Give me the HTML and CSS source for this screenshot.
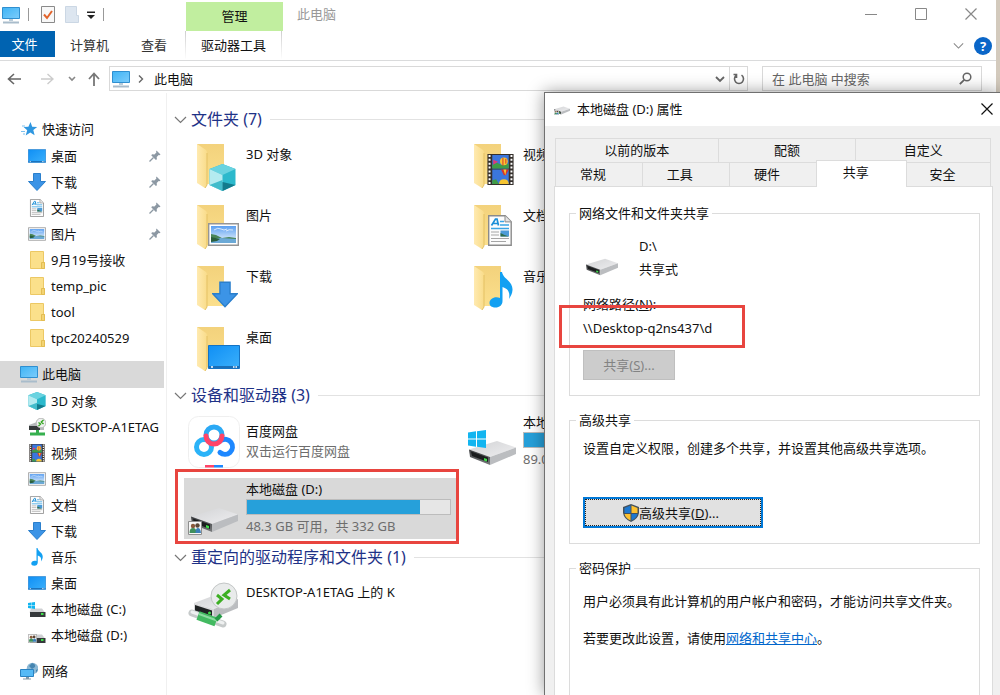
FILE: index.html
```html
<!DOCTYPE html>
<html lang="zh-CN">
<head>
    <meta charset="UTF-8">
    <meta name="viewport" content="width=device-width, initial-scale=1.0">
    <title>此电脑</title>
    <link rel="stylesheet" href="styles.css">
</head>
<body>
    <!-- 图标 -->
    <svg class="sprite" width="0" height="0" aria-hidden="true">
        <defs>
            <linearGradient id="g-blue" x1="0" y1="0" x2="1" y2="1">
                <stop offset="0" stop-color="#3fb4f5"/><stop offset="1" stop-color="#7cccfb"/>
            </linearGradient>
            <linearGradient id="g-desk" x1="0" y1="0" x2="1" y2="1">
                <stop offset="0" stop-color="#0f8ff5"/><stop offset="1" stop-color="#3bb0fb"/>
            </linearGradient>
            <linearGradient id="g-back" x1="0" y1="0" x2="0" y2="1">
                <stop offset="0" stop-color="#f3d27c"/><stop offset="1" stop-color="#fbdf8c"/>
            </linearGradient>
            <linearGradient id="g-flap" x1="0" y1="0" x2="1" y2="0">
                <stop offset="0" stop-color="#ffeab0"/><stop offset="1" stop-color="#f9dc8a"/>
            </linearGradient>
            <linearGradient id="g-drive" x1="0" y1="0" x2="1" y2="1">
                <stop offset="0" stop-color="#d2d3d5"/><stop offset="1" stop-color="#eeeef0"/>
            </linearGradient>
            <linearGradient id="g-front" x1="0" y1="0" x2="0" y2="1">
                <stop offset="0" stop-color="#3c3e40"/><stop offset="1" stop-color="#77797b"/>
            </linearGradient>
            <linearGradient id="g-sky" x1="0" y1="0" x2="0" y2="1">
                <stop offset="0" stop-color="#5b9ff0"/><stop offset="1" stop-color="#f2f9fe"/>
            </linearGradient>
        </defs>
        <symbol id="i-pc" viewBox="0 0 18 18">
            <path d="M.5 1.500h17v11H.5z" fill="url(#g-blue)" stroke="#2f8fd0"/>
            <path d="M7 13h4v2H7z" fill="#b9cbd8"/>
            <path d="M1 15.500h16v2H1z" fill="#a9bccb"/>
        </symbol>
        <symbol id="i-star" viewBox="0 0 18 18">
            <path d="M10.500 2l1.700 4.700 5 .2-3.900 3.200 1.300 5.200-4.300-2.900-4.600 3 1.500-5.200-3.600-3.200 4.800-.2z" fill="#2f97e0"/>
            <path d="M2 6h3M1 11.500h4M3 14h2" stroke="#7cc0ee"/>
        </symbol>
        <symbol id="i-desktop" viewBox="0 0 32 24">
            <path d="M.5.5h31v23H.5z" fill="url(#g-desk)" stroke="#1473c4"/>
            <path d="M1 21h30v2H1z" fill="#1a6fb8"/>
            <path d="M3 22h2M25 22h1.500M27.500 22h1.500" stroke="#fff" stroke-width="1.500"/>
        </symbol>
        <symbol id="i-down" viewBox="0 0 18 18">
            <path d="M5.500.5h7v8h5L9 17.500.5 8.500h5z" fill="#3c94e6" stroke="#2b7fcc"/>
        </symbol>
        <symbol id="i-doc" viewBox="0 0 24 31">
            <path d="M.7.7h16.500l6 6v23.500H.7z" fill="#fcfcfc" stroke="#8b8b8b" stroke-width="1.400"/>
            <path d="M17 .7v6.200h6.200" fill="#e4e4e4" stroke="#8b8b8b"/>
            <path d="M3.500 10.500L7.500 4h1.500l1.500 6.500M5 8.500h4.500" fill="none" stroke="#1a8fd8" stroke-width="1.700"/>
            <path d="M12 6.500h4M12 10h9M3 13.500h18" stroke="#3aa5e4" stroke-width="1.400"/>
            <path d="M3 17h8M3 20h8M3 23.500h18M3 26.500h15" stroke="#a5a5a5" stroke-width="1.200"/>
            <path d="M12.500 15.500h8.500v6h-8.500z" fill="#4d9bd8"/><path d="M12.500 18l4 2 4.500 1.500h-8.500z" fill="#2f6d4a"/>
        </symbol>
        <symbol id="i-pic" viewBox="0 0 31 23">
            <path d="M.7.7h29.600v21.600H.7z" fill="#fff" stroke="#959595" stroke-width="1.400"/>
            <path d="M3 3h25v17H3z" fill="url(#g-sky)"/>
            <path d="M6 7q4-3 7-1t6 0M18 8q3-2 7-1" stroke="#fff" fill="none" opacity=".7"/>
            <path d="M3 11l5 1 6 3 7-1 7 1v2H3z" fill="#4a8558"/>
            <path d="M3 16l10-1 15 1v4H3z" fill="#6ba9d6"/>
            <path d="M3 14l9 2-3 2-6 1z" fill="#2b5f3d"/>
        </symbol>
        <symbol id="i-folder" viewBox="0 0 18 18">
            <path d="M2.500.5h13v11h1v6h-14z" fill="#fbe08b" stroke="#ecc864"/>
            <path d="M13.500 11.500h3v6h-3z" fill="#f3d373" stroke="#e3bd52"/>
        </symbol>
        <symbol id="i-bigfolder" viewBox="0 0 52 52">
            <path d="M9 4h27v40H17z" fill="url(#g-back)"/>
            <path d="M9 4l9 6q1 1 1 3v32l-2 3-8-5z" fill="url(#g-flap)"/>
            <path d="M19 13v32l-2 3" fill="none" stroke="#e4c164"/>
        </symbol>
        <symbol id="i-cube" viewBox="0 0 26 27">
            <path d="M13 0l13 5v16l-13 6-13-6V5z" fill="#2cb9cc"/>
            <path d="M13 0l13 5-13 6L0 5z" fill="#6ad3e0"/>
            <path d="M0 5l13 6v16L0 21z" fill="#b4ebf0"/>
            <path d="M0 21l13-5v11z" fill="#42bccb"/>
            <path d="M13 18l13 3-13 6z" fill="#137b8c"/>
        </symbol>
        <symbol id="i-film" viewBox="0 0 27 32">
            <path d="M0 0h27v32H0z" fill="#35302c"/>
            <path d="M2.200 1v31M24.800 1v31" stroke="#fff" stroke-width="2" stroke-dasharray="2 2"/>
            <path d="M5 1h17v14H5zM5 16h17v15H5z" fill="#3b76dd"/>
            <path d="M5 11l5-2 4 2 8-1v5H5z" fill="#3f9c46"/>
            <circle cx="17" cy="7.500" r="4" fill="#f6c531"/><path d="M16 4v8M19 5v5" stroke="#d8352b"/>
            <path d="M6 6l5 2-5 3z" fill="#e03a75"/>
            <path d="M14 16h8l-3 6h-2z" fill="#d8352b"/><path d="M16.500 16h3l-1 6z" fill="#f6c531"/>
            <path d="M12 31q0-5 5-5t5 5z" fill="#f6c531"/><path d="M5 27l4-1 3 5H5z" fill="#3f9c46"/>
        </symbol>
        <symbol id="i-music" viewBox="0 0 24 36">
            <path d="M11 0h2c1 7 11 9 10.500 18-.2 4-2 6-3.500 9 1-6 0-10-6.500-12v14c0 4-3 6.500-7 6.500C3 35.500.5 34 .5 31c0-4 5-7 10.500-5z" fill="#12a0f2"/>
        </symbol>
        <symbol id="i-drive" viewBox="0 0 47 24">
            <path d="M0 8.500L28 0l19 6.500L21 16z" fill="url(#g-drive)"/>
            <path d="M0 8.500L21 16v8L1 16z" fill="url(#g-front)"/>
            <path d="M21 16L47 6.500v6.500L21 24z" fill="#bbbdc0"/>
            <path d="M2 10.500l17 6v4.500L3 15z" fill="#1b1d1e"/>
            <path d="M15 17l3 1v2.500l-3-1z" fill="#3fe04a"/>
        </symbol>
        <symbol id="i-win" viewBox="0 0 18 18">
            <path d="M0 2.500l8-1.200v7.200H0zM9 1.200L18 0v8.500H9zM0 9.500h8v7.200l-8-1.200zM9 9.500h9V18l-9-1.200z" fill="#12b5f0"/>
        </symbol>
        <symbol id="i-users" viewBox="0 0 14 14">
            <path d="M.5.5h13v13H.5z" fill="#f7f7f7" stroke="#8e8e8e"/>
            <circle cx="5" cy="5" r="2.200" fill="#8a5a3c"/><circle cx="9.500" cy="4.500" r="2.200" fill="#5b4636"/>
            <path d="M1.500 12q0-5 3.500-5t3.500 5z" fill="#3f8f5c"/><path d="M7.500 12q0-5 2.500-5t3 5z" fill="#3b7fb8"/>
        </symbol>
        <symbol id="i-remote" viewBox="0 0 52 52">
            <path d="M6 25l24-9 20 5-24 10z" fill="url(#g-drive)"/>
            <path d="M26 31l24-10v9L26 40z" fill="#bbbdc0"/>
            <path d="M6 25l20 6v9L6 34z" fill="#d9d9db"/>
            <path d="M7 27l17 5.500v5.500L7 33z" fill="#202324"/>
            <circle cx="21.500" cy="35" r="1.500" fill="#3fe04a"/>
            <path d="M4 35l31 11" stroke="#c6caca" stroke-width="7" stroke-linecap="round"/>
            <path d="M4 34l31 11" stroke="#eef0f0" stroke-width="3" stroke-linecap="round"/>
            <path d="M10 37.500l18 6.500" stroke="#43ba61" stroke-width="9"/>
            <path d="M11 36l18 6.500" stroke="#8cdca0" stroke-width="2"/>
            <path d="M28 42l5-5" stroke="#249a45" stroke-width="4"/>
            <circle cx="36" cy="18" r="13" fill="#e9ebeb" stroke="#c3c6c6"/>
            <path d="M29 17l5 4-5 5M42 12l-6 5 6 4" fill="none" stroke="#3caf22" stroke-width="3"/>
        </symbol>
        <symbol id="i-remote-s" viewBox="0 0 18 18">
            <path d="M1 7l8-3 7 3v5H1z" fill="#b5b8ba"/><path d="M1 8h11v4H1z" fill="#35393b"/>
            <path d="M8 12h3v3H8zM2 14.500h15v3H2z" fill="#36b04f"/>
            <circle cx="13" cy="5" r="4.800" fill="#eef0f0" stroke="#bbb"/>
            <path d="M10.500 4.500l2 1.500-2 2M15.500 2l-2.200 2L15.500 6" fill="none" stroke="#31a51d" stroke-width="1.400"/>
        </symbol>
        <symbol id="i-drive-s" viewBox="0 0 18 18">
            <path d="M3 8.500h11l3 4H1.500z" fill="#cfd1d3"/><path d="M2 12h15.500v5H2z" fill="#35393b"/>
            <path d="M13 14h2.500" stroke="#3fe04a" stroke-width="2"/>
        </symbol>
        <symbol id="i-net" viewBox="0 0 18 18">
            <circle cx="12.500" cy="6.500" r="5.800" fill="#8cb8d4"/>
            <path d="M12 1q4 1 3 4l-3 2-3-3zM16 8l2-1-2 4z" fill="#4685b0"/>
            <path d="M.5 7.500h13v7H.5z" fill="#55baf6" stroke="#2a83c2"/>
            <path d="M6 15h3v2H6zM3 16.500h8v1H3z" fill="#8299a8"/>
        </symbol>
        <symbol id="i-pin" viewBox="0 0 12 12">
            <path d="M7.500.5l4 4-1 .7-.8-.2-2 2 .2 2.300-1 .8L2.200 5.200l1-.9 2.200.2 2-2-.3-1z" fill="#8c98a3"/>
            <path d="M4.500 7.500L.5 11.500" stroke="#8c98a3" stroke-width="1.200"/>
        </symbol>
        <symbol id="i-chevron" viewBox="0 0 13 13">
            <path d="M1 4l5.500 5.500L12 4" fill="none" stroke="currentColor" stroke-width="1.200"/>
        </symbol>
        <symbol id="i-close" viewBox="0 0 12 12">
            <path d="M.5.5l11 11M11.500.5l-11 11" fill="none" stroke="currentColor" stroke-width="1.200"/>
        </symbol>
    </svg>

    <!-- 资源管理器窗口 -->
    <div class="explorer">
        <header class="title-bar">
            <div class="quick-bar">
                <svg width="18" height="18"><use href="#i-pc"/></svg>
                <span class="divider"></span>
                <svg class="prop" width="14" height="17" viewBox="0 0 14 17">
                    <path d="M.5.5h13v16H.5z" fill="#f8f8f8" stroke="#8a8a8a"/>
                    <path d="M3 8.500l3 3.500 5-7" fill="none" stroke="#e2642c" stroke-width="2"/>
                </svg>
                <svg width="14" height="17" viewBox="0 0 14 17">
                    <path d="M.5.5h11v9h2v7H.5z" fill="#dde6f0" stroke="#cbd7e4"/>
                </svg>
                <svg class="more" width="8" height="8" viewBox="0 0 8 8"><path d="M0 .5h8v1.500H0zM0 4h8L4 8z" fill="#222"/></svg>
                <span class="divider"></span>
            </div>
            <div class="context-title">管理</div>
            <h1 class="window-title">此电脑</h1>
            <div class="window-controls">
                <button type="button" aria-label="最小化"><svg width="12" height="12" viewBox="0 0 12 12"><path d="M0 6.500h12" stroke="currentColor"/></svg></button>
                <button type="button" aria-label="最大化"><svg width="12" height="12" viewBox="0 0 12 12"><path d="M.5.5h11v11H.5z" fill="none" stroke="currentColor"/></svg></button>
                <button type="button" aria-label="关闭"><svg width="12" height="12"><use href="#i-close"/></svg></button>
            </div>
        </header>

        <div class="ribbon-tabs">
            <button type="button" class="file-tab">文件</button>
            <button type="button" class="ribbon-tab">计算机</button>
            <button type="button" class="ribbon-tab">查看</button>
            <button type="button" class="context-tab">驱动器工具</button>
            <div class="ribbon-right">
                <svg width="11" height="11"><use href="#i-chevron"/></svg>
                <button type="button" class="help">?</button>
            </div>
        </div>

        <div class="address-row">
            <button type="button" class="nav-btn back" aria-label="后退"><svg width="14" height="14" viewBox="0 0 14 14"><path d="M7 2L1.500 7 7 12M1.500 7H14" fill="none" stroke="#666" stroke-width="1.600"/></svg></button>
            <button type="button" class="nav-btn forward" aria-label="前进"><svg width="14" height="14" viewBox="0 0 14 14"><path d="M7.500 2L13 7l-5.500 5M13 7H1" fill="none" stroke="#ccc" stroke-width="1.400"/></svg></button>
            <button type="button" class="nav-btn recent" aria-label="最近"><svg width="8" height="8" viewBox="0 0 8 8"><path d="M1 2l3 3 3-3" fill="none" stroke="#888" stroke-width="1.600"/></svg></button>
            <button type="button" class="nav-btn up" aria-label="向上"><svg width="14" height="14" viewBox="0 0 14 14"><path d="M2 7l5-5.500L12 7M7 2v12" fill="none" stroke="#777" stroke-width="1.800"/></svg></button>
            <div class="address-box">
                <svg width="18" height="18"><use href="#i-pc"/></svg>
                <svg class="crumb-arrow" width="6" height="8" viewBox="0 0 6 8"><path d="M1 .5L4.500 4 1 7.500" fill="none" stroke="#666" stroke-width="1.400"/></svg>
                <span class="crumb">此电脑</span>
                <button type="button" class="address-drop" aria-label="展开"><svg width="10" height="8" viewBox="0 0 10 8"><path d="M1 2l4 4 4-4" fill="none" stroke="#666" stroke-width="1.800"/></svg></button>
                <button type="button" class="refresh" aria-label="刷新"><svg width="12" height="12" viewBox="0 0 12 12"><path d="M8.500 2.200a4.500 4.500 0 1 1-5 0M3.500 5V1.500H.5" fill="none" stroke="#666" stroke-width="1.600"/></svg></button>
            </div>
            <div class="search-box">
                <input type="text" aria-label="搜索" placeholder="在 此电脑 中搜索">
                <svg width="13" height="13" viewBox="0 0 13 13"><circle cx="8" cy="5" r="3.800" fill="none" stroke="#666" stroke-width="1.500"/><path d="M5.200 7.800L.8 12.200" stroke="#666" stroke-width="1.800"/></svg>
            </div>
        </div>

        <div class="explorer-body">
            <!-- 导航窗格 -->
            <nav class="tree">
                <div class="tree-root"><svg><use href="#i-star"/></svg>快速访问</div>
                <ul>
                    <li><svg><use href="#i-desktop"/></svg>桌面<svg class="pin"><use href="#i-pin"/></svg></li>
                    <li><svg><use href="#i-down"/></svg>下载<svg class="pin"><use href="#i-pin"/></svg></li>
                    <li><svg><use href="#i-doc"/></svg>文档<svg class="pin"><use href="#i-pin"/></svg></li>
                    <li><svg><use href="#i-pic"/></svg>图片<svg class="pin"><use href="#i-pin"/></svg></li>
                    <li><svg><use href="#i-folder"/></svg>9月19号接收</li>
                    <li><svg><use href="#i-folder"/></svg>temp_pic</li>
                    <li><svg><use href="#i-folder"/></svg>tool</li>
                    <li><svg><use href="#i-folder"/></svg>tpc20240529</li>
                </ul>
                <div class="tree-root selected"><svg><use href="#i-pc"/></svg>此电脑</div>
                <ul>
                    <li><svg><use href="#i-cube"/></svg>3D 对象</li>
                    <li><svg><use href="#i-remote-s"/></svg>DESKTOP-A1ETAG</li>
                    <li><svg><use href="#i-film"/></svg>视频</li>
                    <li><svg><use href="#i-pic"/></svg>图片</li>
                    <li><svg><use href="#i-doc"/></svg>文档</li>
                    <li><svg><use href="#i-down"/></svg>下载</li>
                    <li><svg><use href="#i-music"/></svg>音乐</li>
                    <li><svg><use href="#i-desktop"/></svg>桌面</li>
                    <li><svg viewBox="0 0 18 18"><use href="#i-drive-s" width="18" height="18"/><use href="#i-win" x="0" y="2" width="7" height="7"/></svg>本地磁盘 (C:)</li>
                    <li><svg viewBox="0 0 18 18"><use href="#i-drive-s" width="18" height="18"/><use href="#i-users" x="0" y="8" width="9" height="9"/></svg>本地磁盘 (D:)</li>
                </ul>
                <div class="tree-root"><svg><use href="#i-net"/></svg>网络</div>
            </nav>

            <!-- 文件区 -->
            <main class="content">
                <section class="group">
                    <h2><svg width="13" height="13"><use href="#i-chevron"/></svg>文件夹 (7)</h2>
                    <div class="tiles">
                        <div class="tile folder">
                            <svg viewBox="0 0 52 52"><use href="#i-bigfolder"/><use href="#i-cube" x="21" y="24" width="27" height="27"/></svg>
                            <div class="info"><span>3D 对象</span></div>
                        </div>
                        <div class="tile folder">
                            <svg viewBox="0 0 52 52"><use href="#i-bigfolder"/><use href="#i-film" x="22" y="14" width="27" height="31"/></svg>
                            <div class="info"><span>视频</span></div>
                        </div>
                        <div class="tile folder">
                            <svg viewBox="0 0 52 52"><use href="#i-bigfolder"/><use href="#i-pic" x="20" y="22" width="31" height="23"/></svg>
                            <div class="info"><span>图片</span></div>
                        </div>
                        <div class="tile folder">
                            <svg viewBox="0 0 52 52"><use href="#i-bigfolder"/><use href="#i-doc" x="23" y="14" width="24" height="31"/></svg>
                            <div class="info"><span>文档</span></div>
                        </div>
                        <div class="tile folder">
                            <svg viewBox="0 0 52 52"><use href="#i-bigfolder"/><use href="#i-down" x="24" y="19" width="26" height="27"/></svg>
                            <div class="info"><span>下载</span></div>
                        </div>
                        <div class="tile folder">
                            <svg viewBox="0 0 52 52"><use href="#i-bigfolder"/><use href="#i-music" x="24" y="10" width="24" height="36"/></svg>
                            <div class="info"><span>音乐</span></div>
                        </div>
                        <div class="tile folder">
                            <svg viewBox="0 0 52 52"><use href="#i-bigfolder"/><use href="#i-desktop" x="20" y="22" width="32" height="24"/></svg>
                            <div class="info"><span>桌面</span></div>
                        </div>
                    </div>
                </section>

                <section class="group devices">
                    <h2><svg width="13" height="13"><use href="#i-chevron"/></svg>设备和驱动器 (3)</h2>
                    <div class="tiles">
                        <div class="tile">
                            <svg viewBox="0 0 52 52">
                                <rect x=".5" y=".5" width="51" height="51" rx="10" fill="#fff" stroke="#efefef"/>
                                <g fill="none" stroke-width="5" stroke-linecap="round">
                                    <circle cx="16" cy="31" r="7.500" stroke="#2bb3f8"/>
                                    <path d="M32 36.500a7.500 7.500 0 1 0 1-12" stroke="#1e88ff"/>
                                    <circle cx="26" cy="19" r="8" stroke="#2ba9f5"/>
                                    <path d="M18 20a8 8 0 0 0 16 0" stroke="#ff4468"/>
                                </g>
                                <path d="M17 49h9v2.500h-9z" fill="#ff4468"/><path d="M26 49h9v2.500h-9z" fill="#1e88ff"/>
                            </svg>
                            <div class="info"><span>百度网盘</span><span class="sub">双击运行百度网盘</span></div>
                        </div>
                        <div class="tile">
                            <svg viewBox="0 0 52 52"><use href="#i-drive" x="4" y="25" width="47" height="24"/><use href="#i-win" x="3" y="14" width="18" height="18"/></svg>
                            <div class="info"><span>本地磁盘</span><span class="usage"><span class="used" style="width: 62%"></span></span><span class="sub">89.0 GB</span></div>
                        </div>
                        <div class="tile active">
                            <svg viewBox="0 0 52 52"><use href="#i-drive" x="3" y="25" width="47" height="24"/><use href="#i-users" x="0" y="38" width="14" height="14"/></svg>
                            <div class="info"><span>本地磁盘 (D:)</span><span class="usage"><span class="used" style="width: 85%"></span></span><span class="sub">48.3 GB 可用，共 332 GB</span></div>
                            <div class="mark"></div>
                        </div>
                    </div>
                </section>

                <section class="group">
                    <h2><svg width="13" height="13"><use href="#i-chevron"/></svg>重定向的驱动程序和文件夹 (1)</h2>
                    <div class="tiles">
                        <div class="tile folder">
                            <svg><use href="#i-remote"/></svg>
                            <div class="info"><span>DESKTOP-A1ETAG 上的 K</span></div>
                        </div>
                    </div>
                </section>
            </main>
        </div>
    </div>

    <!-- 属性对话框 -->
    <div class="dialog" role="dialog" aria-labelledby="dialog-title">
        <div class="dialog-head">
            <svg width="16" height="16" viewBox="0 0 16 16"><use href="#i-drive" x="0" y="5" width="16" height="9"/><use href="#i-users" x="0" y="9" width="5" height="5"/></svg>
            <h2 id="dialog-title">本地磁盘 (D:) 属性</h2>
            <button type="button" class="dialog-close" aria-label="关闭"><svg width="12" height="12"><use href="#i-close"/></svg></button>
        </div>
        <div class="dialog-body">
            <div class="tabs tabs-top">
                <button type="button">以前的版本</button>
                <button type="button">配额</button>
                <button type="button">自定义</button>
            </div>
            <div class="tabs tabs-bottom">
                <button type="button">常规</button>
                <button type="button">工具</button>
                <button type="button">硬件</button>
                <button type="button" class="current">共享</button>
                <button type="button">安全</button>
            </div>
            <div class="panel">
                <fieldset>
                    <legend>网络文件和文件夹共享</legend>
                    <div class="share-info">
                        <svg width="32" height="18" viewBox="0 0 32 18"><use href="#i-drive" width="32" height="18"/></svg>
                        <div><p>D:\</p><p>共享式</p></div>
                    </div>
                    <p class="line">网络路径(<u>N</u>):</p>
                    <p class="line path">\\Desktop-q2ns437\d<span class="mark"></span></p>
                    <button type="button" class="share-btn" disabled>共享(<u>S</u>)...</button>
                </fieldset>
                <fieldset class="advanced">
                    <legend>高级共享</legend>
                    <p class="line">设置自定义权限，创建多个共享，并设置其他高级共享选项。</p>
                    <button type="button" class="advanced-btn">
                        <svg width="16" height="18" viewBox="0 0 16 18">
                            <path d="M8 0l8 3v6q-1 6-8 9-7-3-8-9V3z" fill="#44515c"/>
                            <path d="M7.500 1.500V9h-6V4z" fill="#1d78d0"/><path d="M8.500 1.500V9h6V4z" fill="#fdc12f"/>
                            <path d="M7.500 10v6.500Q2.500 14 1.500 10z" fill="#fdc12f"/><path d="M8.500 10v6.500q5-2.500 6-6.500z" fill="#1d78d0"/>
                        </svg>高级共享(<u>D</u>)...
                    </button>
                </fieldset>
                <fieldset class="password">
                    <legend>密码保护</legend>
                    <p class="line">用户必须具有此计算机的用户帐户和密码，才能访问共享文件夹。</p>
                    <p class="line">若要更改此设置，请使用<a href="#">网络和共享中心</a>。</p>
                </fieldset>
            </div>
        </div>
    </div>
</body>
</html>
```

FILE: styles.css
```css
* {
    box-sizing: border-box;
}

body {
    margin: 0;
    height: 100vh;
    overflow: hidden;
    position: relative;
    background-color: #d3cabd;
    color: #111;
    font-family: "Noto Sans", "Noto Sans CJK SC", sans-serif;
    font-size: 13px;
    line-height: 20px;
}

button,
input {
    margin: 0;
    padding: 0;
    border: none;
    background: none;
    color: inherit;
    font: inherit;
}

h1, h2, p, ul {
    margin: 0;
    padding: 0;
    font-weight: normal;
}

svg {
    display: block;
    flex-shrink: 0;
}

.sprite {
    position: absolute;
}

/* 主窗口 */
.explorer {
    display: flex;
    flex-direction: column;
    height: 100%;
    margin-right: 4px;
    background-color: #fff;
}

.title-bar {
    display: flex;
    height: 31px;
}

.quick-bar {
    display: flex;
    align-items: center;
    gap: 8px;
    width: 186px;
    padding: 0 0 2px 2px;
}

.quick-bar .divider {
    width: 1px;
    height: 13px;
    background-color: #999;
}

.quick-bar .prop {
    margin: 0 2px 0 4px;
}

.context-title {
    width: 97px;
    margin-top: 2px;
    background-color: #c1ee9f;
    text-align: center;
    line-height: 29px;
}

.window-title {
    flex-grow: 1;
    padding-left: 14px;
    color: #999;
    font-size: 13px;
    line-height: 29px;
}

.window-controls {
    display: flex;
}

.window-controls button {
    display: flex;
    align-items: center;
    justify-content: center;
    width: 50px;
    height: 28px;
    color: #888;
}

.ribbon-tabs {
    display: flex;
    height: 30px;
    border-bottom: 1px solid #dadbdc;
}

.file-tab {
    width: 55px;
    height: 26px;
    padding-right: 6px;
    background-color: #0063b1;
    color: #fff;
}

.ribbon-tab {
    height: 28px;
    padding: 0 17px 0 15px;
    color: #333;
}

.context-tab {
    width: 97px;
    height: 28px;
    margin-left: 1px;
    border: 1px solid;
    border-width: 0 1px;
    border-image: linear-gradient(#ccc, #fff) 1;
}

.ribbon-right {
    display: flex;
    align-items: center;
    gap: 10px;
    margin-left: auto;
    padding-right: 4px;
    color: #888;
}

.help {
    width: 18px;
    height: 18px;
    border-radius: 9px;
    background-color: #0a66c8;
    color: #fff;
    font-weight: bold;
    line-height: 18px;
}

.address-row {
    display: flex;
    align-items: center;
    height: 32px;
    padding: 5px 14px 2px 0;
}

.nav-btn {
    display: flex;
    justify-content: center;
}

.back {
    width: 28px;
}

.forward {
    width: 38px;
}

.recent {
    width: 12px;
}

.up {
    width: 31px;
}

.address-box,
.search-box {
    display: flex;
    align-items: center;
    height: 25px;
    border: 1px solid #d9d9d9;
}

.address-box {
    flex-grow: 1;
    padding-left: 2px;
}

.crumb-arrow {
    margin: 0 10px 0 8px;
}

.address-drop {
    width: 18px;
    margin-left: auto;
    padding-left: 4px;
}

.refresh {
    width: 18px;
    height: 23px;
    padding-left: 3px;
    border-left: 1px solid #d9d9d9;
}

.search-box {
    width: 220px;
    margin-left: 14px;
    padding: 0 9px;
}

.search-box input {
    flex-grow: 1;
    min-width: 0;
    outline: none;
}

.search-box input::placeholder {
    color: #666;
}

.explorer-body {
    display: flex;
    flex-grow: 1;
    min-height: 0;
}

/* 导航窗格 */
.tree {
    width: 167px;
    flex-shrink: 0;
    padding: 23px 2px 0 0;
    border-right: 1px solid #f0f0f0;
    overflow: hidden;
}

.tree ul {
    margin-bottom: 10px;
    list-style: none;
}

.tree-root,
.tree li {
    display: flex;
    align-items: center;
    gap: 5px;
    height: 26px;
    padding-left: 28px;
    white-space: nowrap;
    overflow: hidden;
}

.tree-root {
    gap: 4px;
    height: 27px;
    padding: 0 0 1px 20px;
}

.tree svg {
    width: 18px;
    height: 18px;
}

.tree .pin {
    width: 12px;
    height: 12px;
    margin: 0 3px 0 auto;
}

.tree .selected {
    background-color: #d9d9d9;
}

/* 内容区 */
.content {
    flex-grow: 1;
    min-width: 0;
    padding-top: 10px;
    overflow: hidden;
}

.group h2 {
    display: flex;
    align-items: center;
    gap: 4px;
    height: 32px;
    padding-left: 7px;
    color: #1e3287;
    font-size: 16px;
}

.group h2 svg {
    color: #777;
}

.group h2::after {
    content: "";
    flex-grow: 1;
    height: 1px;
    margin-left: 4px;
    background-color: #e2e2e2;
}

.tiles {
    display: grid;
    grid-template-columns: repeat(auto-fill, 273px);
    gap: 0 4px;
    padding-left: 17px;
}

.devices {
    padding-bottom: 2px;
}

.devices .tiles {
    row-gap: 6px;
}

.tile {
    position: relative;
    display: flex;
    align-items: center;
    gap: 6px;
    height: 61px;
    padding: 0 6px 0 4px;
}

.tile > svg {
    width: 52px;
    height: 52px;
}

.tile.active {
    background-color: #d9d9d9;
}

.info {
    display: flex;
    flex-direction: column;
    flex-grow: 1;
    padding-bottom: 2px;
    white-space: nowrap;
}

.folder .info {
    align-self: flex-start;
    padding-top: 9px;
}

.sub {
    color: #6d6d6d;
}

.usage {
    height: 16px;
    margin-bottom: 1px;
    border: 1px solid #bcbcbc;
    background-color: #e6e6e6;
}

.used {
    display: block;
    height: 100%;
    background-color: #26a0da;
}

/* 红色标注框 */
.mark {
    position: absolute;
    border: 3px solid #e8453f;
}

.tile .mark {
    inset: -9px -2px -5px -9px;
}

/* 属性对话框 */
.dialog {
    position: absolute;
    top: 92px;
    right: 0;
    bottom: 0;
    left: 544px;
    display: flex;
    flex-direction: column;
    border: 1px solid #707070;
    border-width: 1px 0 0 1px;
    background-color: #f0f0f0;
    box-shadow: 0 0 16px rgba(0, 0, 0, 0.4);
}

.dialog-head {
    display: flex;
    align-items: center;
    gap: 7px;
    height: 33px;
    padding: 0 7px 2px 9px;
    background-color: #fff;
}

.dialog-head h2 {
    font-size: 13px;
}

.dialog-close {
    margin-left: auto;
}

.dialog-body {
    display: flex;
    flex-direction: column;
    flex-grow: 1;
    min-height: 0;
    padding: 12px 7px 0 9px;
}

.tabs {
    display: grid;
    height: 24px;
    margin: 0 2px 0 1px;
    border-left: 1px solid #dcdcdc;
}

.tabs-top {
    grid-template-columns: 163fr 138fr 135fr;
}

.tabs-bottom {
    grid-template-columns: 87fr 87fr 88fr 90fr 84fr;
}

.tabs button {
    padding-bottom: 2px;
    border: 1px solid #dcdcdc;
    border-width: 1px 1px 0 0;
}

.tabs-bottom button {
    padding-right: 12px;
}

.tabs .current {
    position: relative;
    z-index: 1;
    margin: -2px 0 -1px -1px;
    padding-bottom: 5px;
    border-left-width: 1px;
    background-color: #fff;
}

.panel {
    display: flex;
    flex-direction: column;
    flex-grow: 1;
    gap: 15px;
    padding: 17px 12px 0 14px;
    border: 1px solid #dcdcdc;
    border-bottom: none;
    background-color: #fff;
}

fieldset {
    min-width: 0;
    margin: 0;
    padding: 13px 13px 15px;
    border: 1px solid #dcdcdc;
}

legend {
    margin-left: -7px;
    padding: 0 3px;
    line-height: 18px;
}

.share-info {
    display: flex;
    align-items: center;
    gap: 21px;
    margin-bottom: 11px;
    padding-left: 3px;
    line-height: 23px;
}

.share-info svg {
    margin-top: 18px;
}

.line {
    line-height: 24px;
}

.path {
    position: relative;
    margin-bottom: 10px;
}

.path .mark {
    top: -11px;
    left: -24px;
    width: 186px;
    height: 43px;
}

.share-btn {
    width: 92px;
    height: 30px;
    border: 1px solid #bfbfbf;
    background-color: #ccc;
    color: #838383;
}

.advanced {
    padding-top: 7px;
}

.advanced-btn {
    display: flex;
    align-items: center;
    justify-content: center;
    width: 180px;
    height: 31px;
    margin-top: 37px;
    padding-right: 4px;
    border: 2px solid #0078d7;
    outline: 1px dotted #222;
    outline-offset: -3px;
    background-color: #e1e1e1;
}

.password {
    flex-grow: 1;
    padding-top: 12px;
    border-bottom: none;
}

.password .line {
    margin-bottom: 13px;
}

a {
    color: #0066cc;
}
```
